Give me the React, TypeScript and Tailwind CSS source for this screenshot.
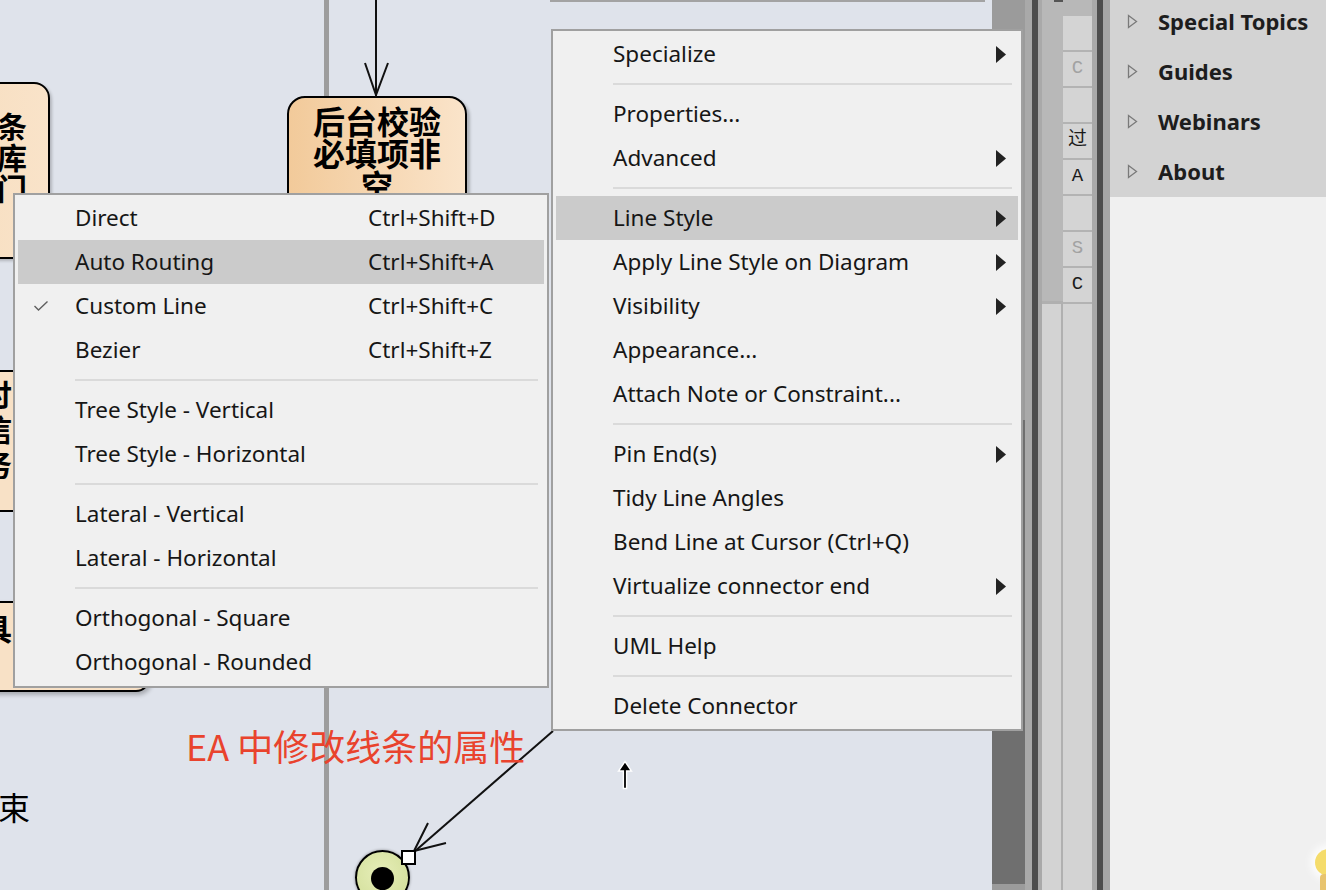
import React from "react";

type Item = {
  label?: string;
  shortcut?: string;
  sub?: boolean;
  checked?: boolean;
  active?: boolean;
  sep?: boolean;
};

const SEP: Item = { sep: true };

const lineStyleItems: Item[] = [
  { label: "Direct", shortcut: "Ctrl+Shift+D" },
  { label: "Auto Routing", shortcut: "Ctrl+Shift+A", active: true },
  { label: "Custom Line", shortcut: "Ctrl+Shift+C", checked: true },
  { label: "Bezier", shortcut: "Ctrl+Shift+Z" },
  SEP,
  { label: "Tree Style - Vertical" },
  { label: "Tree Style - Horizontal" },
  SEP,
  { label: "Lateral - Vertical" },
  { label: "Lateral - Horizontal" },
  SEP,
  { label: "Orthogonal - Square" },
  { label: "Orthogonal - Rounded" },
];

const connectorItems: Item[] = [
  { label: "Specialize", sub: true },
  SEP,
  { label: "Properties..." },
  { label: "Advanced", sub: true },
  SEP,
  { label: "Line Style", sub: true, active: true },
  { label: "Apply Line Style on Diagram", sub: true },
  { label: "Visibility", sub: true },
  { label: "Appearance..." },
  { label: "Attach Note or Constraint..." },
  SEP,
  { label: "Pin End(s)", sub: true },
  { label: "Tidy Line Angles" },
  { label: "Bend Line at Cursor (Ctrl+Q)" },
  { label: "Virtualize connector end", sub: true },
  SEP,
  { label: "UML Help" },
  SEP,
  { label: "Delete Connector" },
];

function SubArrow() {
  return (
    <svg width="10" height="17" viewBox="0 0 10 17" className="ml-auto mr-[12px] shrink-0">
      <path d="M0 0 L10 8.5 L0 17 Z" fill="#222" />
    </svg>
  );
}

function MenuRow({ item }: { item: Item }) {
  if (item.sep) {
    return (
      <div className="flex h-[16px] items-center pl-[60px] pr-[9px]">
        <div className="h-[2px] w-full bg-[#dadada]" />
      </div>
    );
  }
  return (
    <div
      className={`relative mx-[3px] flex h-[44px] items-center ${
        item.active ? "bg-[#cbcbcb]" : ""
      }`}
    >
      {item.checked && (
        <svg width="16" height="12" viewBox="0 0 16 12" className="absolute left-[15px] top-[16px]">
          <polyline points="1.5,6 5.5,10 14.5,1.5" fill="none" stroke="#5f5f5f" strokeWidth="1.4" />
        </svg>
      )}
      <span className="w-[350px] shrink-0 whitespace-nowrap pl-[57px] text-[22.5px] leading-none text-[#161616]">
        {item.label}
      </span>
      {item.shortcut && (
        <span className="whitespace-nowrap text-[22.5px] leading-none text-[#161616]">{item.shortcut}</span>
      )}
      {item.sub && <SubArrow />}
    </div>
  );
}

function ActionNodeText({ chars, className }: { chars: string[]; className: string }) {
  return (
    <div
      className={`absolute flex flex-col items-center font-['Noto_Sans_CJK_SC',sans-serif] text-[30px] font-bold text-black ${className}`}
    >
      {chars.map((c, i) => (
        <span key={i}>{c}</span>
      ))}
    </div>
  );
}

function DiagramCanvas() {
  return (
    <div className="relative h-full w-[992px] shrink-0 overflow-hidden bg-[#dfe3eb]">
      {/* swimlane divider and a frame edge at the top */}
      <div className="absolute left-[324px] top-0 h-full w-[5px] bg-[#9d9d9d]" />
      <div className="absolute left-[550px] top-0 h-[2px] w-[435px] bg-[#a3a3a3]" />

      {/* activities cut off at the left edge */}
      <div className="absolute left-[-150px] top-[82px] h-[177px] w-[200px] rounded-[16px] border-2 border-black bg-gradient-to-r from-[#f6d9b6] to-[#f9e3c9] shadow-[2px_2px_3px_rgba(0,0,0,0.2)]">
        <ActionNodeText chars={["条", "库", "门"]} className="right-[21px] top-[26px] leading-[31px]" />
      </div>
      <div className="absolute left-[-150px] top-[370px] h-[142px] w-[300px] rounded-[14px] border-2 border-black bg-[#f8e1c6]">
        <ActionNodeText chars={["讨", "信", "务"]} className="right-[136px] top-[4px] leading-[35px]" />
      </div>
      <div className="absolute left-[-150px] top-[601px] h-[91px] w-[300px] rounded-[14px] border-2 border-black bg-[#f8e1c6] shadow-[2px_3px_4px_rgba(0,0,0,0.25)]">
        <ActionNodeText chars={["具"]} className="right-[136px] top-[8px] leading-[32px]" />
      </div>

      {/* 后台校验必填项非空 */}
      <div className="absolute left-[287px] top-[96px] h-[140px] w-[180px] rounded-[18px] border-2 border-black bg-gradient-to-r from-[#f2ca9a] to-[#fae4ca] shadow-[3px_3px_3px_rgba(0,0,0,0.22)]">
        <div className="flex flex-col items-center pt-[6px] font-['Noto_Sans_CJK_SC',sans-serif] text-[32px] font-bold leading-[32px] text-black">
          <span>后台校验</span>
          <span>必填项非</span>
          <span>空</span>
        </div>
      </div>

      {/* connectors */}
      <svg className="absolute left-0 top-0" width="992" height="890" viewBox="0 0 992 890">
        <g stroke="#111" strokeWidth="2" fill="none">
          <line x1="376" y1="0" x2="376" y2="96" />
          <polyline points="365,63 376,95 388,63" />
          <line x1="553" y1="731" x2="414" y2="852" />
          <polyline points="428,823 414,851 446,843" />
        </g>
      </svg>

      {/* final node */}
      <div className="absolute left-[355px] top-[850px] flex h-[55px] w-[55px] items-start justify-center rounded-full border-2 border-black bg-[radial-gradient(circle_at_45%_40%,#e6eeb8,#cfdc95)] pt-[15px] shadow-[0_0_3px_rgba(0,0,0,0.4)]">
        <div className="h-[23px] w-[23px] rounded-full bg-black" />
      </div>
      <div className="absolute left-[401px] top-[850px] h-[15px] w-[15px] border-2 border-black bg-white" />

      {/* caption */}
      <div className="absolute left-[186px] top-[722px] whitespace-nowrap font-['Noto_Sans_CJK_SC',sans-serif] text-[36px] leading-[46px] text-[#e9432d]">
        EA 中修改线条的属性
      </div>

      <div className="absolute left-[-2px] top-[788px] font-['Noto_Sans_CJK_SC',sans-serif] text-[32px] leading-[36px] text-black">
        束
      </div>

      {/* mouse cursor */}
      <svg className="absolute left-[617px] top-[760px]" width="16" height="30" viewBox="0 0 16 30">
        <path d="M8 1.5 L14.5 11 L9.6 11 L9.6 28.5 L6.4 28.5 L6.4 11 L1.5 11 Z" fill="#000" stroke="#fff" strokeWidth="1.4" />
      </svg>
    </div>
  );
}

function Scrollbar() {
  return (
    <div className="flex h-full w-[33px] shrink-0 flex-col">
      <div className="h-[420px] bg-[#9b9b9b]" />
      <div className="flex-1 bg-[#6f6f6f]" />
      <div className="h-[6px] bg-[#9b9b9b]" />
    </div>
  );
}

const cells: { t: string; dim?: boolean }[] = [
  { t: "" },
  { t: "C", dim: true },
  { t: "" },
  { t: "过" },
  { t: "A" },
  { t: "" },
  { t: "S", dim: true },
  { t: "C" },
];

function ToolStrip() {
  return (
    <div className="flex h-full w-[85px] shrink-0">
      <div className="w-[7px] bg-[#a9a9a9]" />
      <div className="w-[6px] bg-[#4d4d4d]" />
      <div className="w-[4px] bg-[#a9a9a9]" />
      <div className="flex w-[21px] flex-col">
        <div className="relative h-[301px] bg-[#b8b8b8]">
          <div className="absolute left-[12px] top-0 h-[2px] w-[9px] bg-[#555]" />
        </div>
        <div className="h-[3px] bg-[#b0b0b0]" />
        <div className="flex-1 border-r-2 border-[#b0b0b0] bg-[#d3d3d3]" />
      </div>
      <div className="flex w-[29px] flex-col">
        <div className="h-[16px] bg-[#b8b8b8]" />
        {cells.map((c, i) => (
          <div
            key={i}
            className={`flex h-[36px] items-center justify-center border-b-2 border-[#b3b3b3] bg-[#d4d4d4] pb-[2px] font-['Liberation_Mono','Noto_Sans_CJK_SC',monospace] text-[19px] leading-none ${
              c.dim ? "text-[#a2a2a2]" : "text-[#1a1a1a]"
            }`}
          >
            {c.t}
          </div>
        ))}
        <div className="flex-1 bg-[#d3d3d3]" />
      </div>
      <div className="w-[5px] bg-[#a9a9a9]" />
      <div className="w-[6px] bg-[#4d4d4d]" />
      <div className="w-[7px] bg-[#a6a6a6]" />
    </div>
  );
}

function HelpPanel() {
  return (
    <div className="relative flex h-full flex-1 flex-col bg-[#f0f0f0]">
      <div className="h-[197px] bg-[#d3d3d3] pl-[17px]">
        {["Special Topics", "Guides", "Webinars", "About"].map((t) => (
          <div key={t} className="flex h-[50px] items-center pb-[8px]">
            <svg width="11" height="15" viewBox="0 0 11 15" className="shrink-0">
              <path d="M1.5 1.5 L9.5 7.5 L1.5 13.5 Z" fill="none" stroke="#7a7a7a" strokeWidth="1.3" />
            </svg>
            <span className="ml-[20px] whitespace-nowrap text-[22px] font-bold leading-none text-[#1d1d1d]">{t}</span>
          </div>
        ))}
      </div>
      {/* lightbulb peeking in at the corner */}
      <div className="absolute bottom-[14px] right-[-16px] h-[27px] w-[27px] rounded-full bg-[#f5dc6b] shadow-[0_0_8px_4px_rgba(255,255,255,0.9)]" />
      <div className="absolute bottom-0 right-[-4px] h-[16px] w-[10px] rounded-t-[4px] bg-[#e8c46f]" />
    </div>
  );
}

function LineStyleMenu() {
  return (
    <div className="absolute left-[13px] top-[193px] w-[536px] border-2 border-[#a0a0a0] bg-[#f0f0f0] pb-[2px] pt-[1px]">
      {lineStyleItems.map((it, i) => (
        <MenuRow key={i} item={it} />
      ))}
    </div>
  );
}

function ConnectorMenu() {
  return (
    <div className="absolute left-[551px] top-[29px] w-[472px] border-2 border-[#a0a0a0] bg-[#f0f0f0] pb-[1px] pt-[1px]">
      {connectorItems.map((it, i) => (
        <MenuRow key={i} item={it} />
      ))}
    </div>
  );
}

export default function App() {
  return (
    <div className="relative flex h-[890px] w-[1326px] overflow-hidden bg-[#f0f0f0] font-['Noto_Sans',sans-serif]">
      <DiagramCanvas />
      <Scrollbar />
      <ToolStrip />
      <HelpPanel />
      <LineStyleMenu />
      <ConnectorMenu />
    </div>
  );
}
